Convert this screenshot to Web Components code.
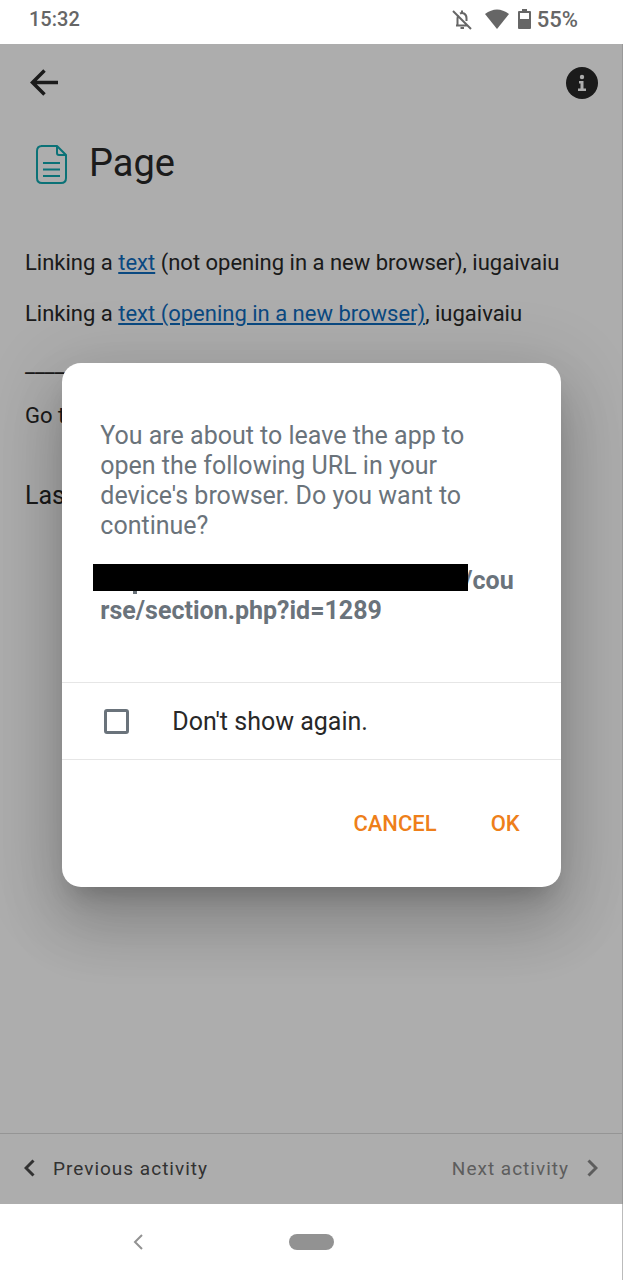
<!DOCTYPE html>
<html lang="en">
<head>
  <meta charset="utf-8">
  <meta name="viewport" content="width=device-width, initial-scale=1">
  <title>Page</title>
  <style>
    body {
      margin: 0;
      min-height: 100vh;
      display: flex;
      flex-direction: column;
      font-family: Roboto, "Noto Sans", sans-serif;
      color: #282828;
      background: #fff;
    }

    app-screen {
      flex: 1;
    }
  </style>
</head>
<body>
  <status-bar time="15:32" battery="55%"></status-bar>
  <app-screen>
    <app-header slot="header"></app-header>
    <page-title>Page</page-title>
    <page-content>
      <p>Linking a <a href="#text">text</a> (not opening in a new browser), iugaivaiu</p>
      <p>Linking a <a href="#browser">text (opening in a new browser)</a>, iugaivaiu</p>
      <p>____</p>
      <p>Go t</p>
      <h2>Las</h2>
    </page-content>
    <activity-nav slot="footer"></activity-nav>
    <confirm-dialog slot="overlay" check-label="Don't show again.">
      You are about to leave the app to open the following URL in your device's browser. Do you want to continue?
      <masked-url slot="url">/cou<br>rse/section.php?id=1289</masked-url>
    </confirm-dialog>
  </app-screen>
  <system-nav></system-nav>

  <script>
    class StatusBar extends HTMLElement {
      constructor() {
        super();
        this.shadowDOM = this.attachShadow({ mode: "open" });
      }

      connectedCallback() {
        this.shadowDOM.innerHTML = `
          <style>
            :host {
              display: flex;
              align-items: center;
              justify-content: space-between;
              box-sizing: border-box;
              height: 44px;
              padding: 0 45px 6px 29px;
              font-size: 20px;
              font-weight: 500;
              color: #666;
            }

            .icons {
              display: flex;
              align-items: center;
            }

            .wifi {
              margin: 0 9px 0 13px;
            }

            .level {
              margin-left: 6px;
              font-size: 22px;
            }
          </style>
          <span>${this.getAttribute("time")}</span>
          <div class="icons">
            <svg width="20" height="21" viewBox="0 0 20 21" fill="none" stroke="#666" stroke-width="2">
              <path d="M1 2L19 20M4 16.500H15M5.500 16V9.500Q5.500 7.500 6.500 6M8 4.500Q10 3.500 12 4.500Q14.500 5.800 14.500 9V12"/>
              <path d="M8.500 19H12M10 1.500V4"/>
            </svg>
            <svg class="wifi" width="24" height="20" viewBox="0 0 24 20">
              <path fill="#666" d="M0 5Q12 -4 24 5L12 20Z"/>
            </svg>
            <svg width="13" height="20" viewBox="0 0 13 20">
              <path fill="#666" fill-rule="evenodd" d="M4 0H9V2H12Q13 2 13 3V19Q13 20 12 20H1Q0 20 0 19V3Q0 2 1 2H4ZM2 4V10H11V4Z"/>
            </svg>
            <span class="level">${this.getAttribute("battery")}</span>
          </div>
        `;
      }
    }

    class AppScreen extends HTMLElement {
      constructor() {
        super();
        this.shadowDOM = this.attachShadow({ mode: "open" });
      }

      connectedCallback() {
        this.shadowDOM.innerHTML = `
          <style>
            :host {
              display: flex;
              flex-direction: column;
              position: relative;
              overflow: hidden;
              border-right: 1px solid #999;
            }

            main {
              flex: 1;
            }
          </style>
          <slot name="header"></slot>
          <main><slot></slot></main>
          <slot name="footer"></slot>
          <slot name="overlay"></slot>
        `;
      }
    }

    class AppHeader extends HTMLElement {
      constructor() {
        super();
        this.shadowDOM = this.attachShadow({ mode: "open" });
      }

      connectedCallback() {
        this.shadowDOM.innerHTML = `
          <style>
            :host {
              display: flex;
              align-items: center;
              justify-content: space-between;
              height: 78px;
              padding: 0 24px 0 30px;
            }

            button {
              display: flex;
              padding: 0;
              border: 0;
              background: none;
              color: inherit;
            }
          </style>
          <button type="button" aria-label="Back">
            <svg width="28" height="28" viewBox="0 0 28 28" fill="none" stroke="currentColor" stroke-width="3.500">
              <path d="M28 13.500H3M14.500 1.500L2.500 13.500L14.500 25.500"/>
            </svg>
          </button>
          <button type="button" aria-label="Information">
            <svg width="32" height="32" viewBox="0 0 32 32">
              <circle cx="16" cy="16" r="16" fill="currentColor"/>
              <circle cx="16" cy="10" r="2.200" fill="#fff"/>
              <path fill="#fff" d="M13 14H17.500V21.500H20V24H12V21.500H14.500V16.500H13Z"/>
            </svg>
          </button>
        `;
      }
    }

    class PageTitle extends HTMLElement {
      constructor() {
        super();
        this.shadowDOM = this.attachShadow({ mode: "open" });
      }

      connectedCallback() {
        this.shadowDOM.innerHTML = `
          <style>
            :host {
              display: flex;
              align-items: flex-end;
              gap: 22px;
              padding: 18px 36px;
            }

            svg {
              padding-bottom: 2px;
            }

            h1 {
              margin: 0;
              font-size: 38px;
              line-height: 46px;
              font-weight: 400;
            }
          </style>
          <svg width="31" height="39" viewBox="0 0 31 39" fill="none" stroke="#11a8b0" stroke-width="2" stroke-linejoin="round">
            <path d="M5 1H21L30 10V33Q30 38 25 38H6Q1 38 1 33V6Q1 1 6 1M21 1V8Q21 10 23 10H30"/>
            <path d="M7 18H24M7 24.500H24M7 31H24"/>
          </svg>
          <h1><slot></slot></h1>
        `;
      }
    }

    class PageContent extends HTMLElement {
      constructor() {
        super();
        this.shadowDOM = this.attachShadow({ mode: "open" });
      }

      connectedCallback() {
        this.shadowDOM.innerHTML = `
          <style>
            :host {
              display: block;
              padding: 44px 25px;
              font-size: 22px;
              line-height: 30px;
            }

            ::slotted(p) {
              margin: 0 0 21px;
            }

            ::slotted(h2) {
              margin: 50px 0 0;
              font-size: 25px;
              font-weight: 400;
            }
          </style>
          <slot></slot>
        `;
        // ::slotted cannot reach the links inside the paragraphs
        this.querySelectorAll("a").forEach((link) => {
          link.style.color = "#0f6cbf";
        });
      }
    }

    class ActivityNav extends HTMLElement {
      constructor() {
        super();
        this.shadowDOM = this.attachShadow({ mode: "open" });
      }

      connectedCallback() {
        this.shadowDOM.innerHTML = `
          <style>
            :host {
              display: flex;
              justify-content: space-between;
              box-sizing: border-box;
              height: 71px;
              padding: 0 24px 2px;
              border-top: 1px solid #dcdcdc;
            }

            button {
              display: flex;
              align-items: center;
              gap: 18px;
              padding: 0;
              border: 0;
              background: none;
              font: 19px Roboto, sans-serif;
              letter-spacing: 1px;
              color: #4a4a4a;
            }

            button:disabled {
              color: #8a8a8a;
            }

            svg {
              fill: none;
              stroke: currentColor;
              stroke-width: 3;
            }
          </style>
          <button type="button">
            <svg width="11" height="18" viewBox="0 0 11 18"><path d="M9.500 1.500L2 9L9.500 16.500"/></svg>
            Previous activity
          </button>
          <button type="button" disabled>
            Next activity
            <svg width="11" height="18" viewBox="0 0 11 18"><path d="M1.500 1.500L9 9L1.500 16.500"/></svg>
          </button>
        `;
      }
    }

    class MaskedUrl extends HTMLElement {
      constructor() {
        super();
        this.shadowDOM = this.attachShadow({ mode: "open" });
      }

      connectedCallback() {
        this.shadowDOM.innerHTML = `
          <style>
            :host {
              display: block;
              position: relative;
              font-weight: 700;
              text-indent: 363px;
            }

            .mask {
              position: absolute;
              top: -2px;
              left: -7px;
              width: 375px;
              height: 27px;
              background: #000;
            }

            .mask::after {
              content: "";
              position: absolute;
              top: 27px;
              left: 40px;
              width: 4px;
              height: 3px;
              background: #6a737b;
            }
          </style>
          <slot></slot>
          <span class="mask"></span>
        `;
      }
    }

    class ConfirmDialog extends HTMLElement {
      constructor() {
        super();
        this.shadowDOM = this.attachShadow({ mode: "open" });
      }

      connectedCallback() {
        this.shadowDOM.innerHTML = `
          <style>
            :host {
              position: absolute;
              inset: 0 -1px 0 0;
              display: flex;
              align-items: center;
              justify-content: center;
              padding-top: 2px;
              background: rgba(0, 0, 0, 0.32);
            }

            .dialog {
              width: 80%;
              border-radius: 19px;
              background: #fff;
              box-shadow: 0 17px 24px -11px rgba(0, 0, 0, 0.2),
                0 38px 60px 5px rgba(0, 0, 0, 0.14),
                0 14px 72px 13px rgba(0, 0, 0, 0.12);
            }

            .message {
              display: flex;
              flex-direction: column;
              gap: 25px;
              padding: 58px 38px 56px;
              font-size: 25px;
              line-height: 30px;
              color: #6a737b;
            }

            .message p {
              margin: 0;
            }

            label {
              display: flex;
              align-items: center;
              gap: 43px;
              height: 76px;
              padding: 0 42px;
              border: solid #e6e6e6;
              border-width: 1px 0;
              font-size: 25px;
            }

            input {
              appearance: none;
              width: 25px;
              height: 25px;
              margin: 0;
              border: 3px solid #6a737b;
              border-radius: 3px;
            }

            .buttons {
              display: flex;
              align-items: center;
              justify-content: flex-end;
              gap: 54px;
              height: 127px;
              padding: 0 41px;
            }

            button {
              padding: 0;
              border: 0;
              background: none;
              font: 500 22px Roboto, sans-serif;
              color: #ee7f1a;
              text-transform: uppercase;
            }
          </style>
          <div class="dialog" role="dialog" aria-modal="true">
            <div class="message">
              <p><slot></slot></p>
              <slot name="url"></slot>
            </div>
            <label>
              <input type="checkbox">
              <span>${this.getAttribute("check-label")}</span>
            </label>
            <div class="buttons">
              <button type="button">Cancel</button>
              <button type="button">OK</button>
            </div>
          </div>
        `;
      }
    }

    class SystemNav extends HTMLElement {
      constructor() {
        super();
        this.shadowDOM = this.attachShadow({ mode: "open" });
      }

      connectedCallback() {
        this.shadowDOM.innerHTML = `
          <style>
            :host {
              display: grid;
              grid-template-columns: 1fr 45px 1fr;
              align-items: center;
              column-gap: 146px;
              height: 76px;
              border-right: 1px solid #bbb;
            }

            svg {
              justify-self: end;
            }

            .home {
              height: 16px;
              border-radius: 8px;
              background: #929292;
            }
          </style>
          <svg width="10" height="16" viewBox="0 0 10 16" fill="none" stroke="#929292" stroke-width="2">
            <path d="M9 1L2 8L9 15"/>
          </svg>
          <span class="home"></span>
        `;
      }
    }

    customElements.define("status-bar", StatusBar);
    customElements.define("app-screen", AppScreen);
    customElements.define("app-header", AppHeader);
    customElements.define("page-title", PageTitle);
    customElements.define("page-content", PageContent);
    customElements.define("activity-nav", ActivityNav);
    customElements.define("masked-url", MaskedUrl);
    customElements.define("confirm-dialog", ConfirmDialog);
    customElements.define("system-nav", SystemNav);
  </script>
</body>
</html>
